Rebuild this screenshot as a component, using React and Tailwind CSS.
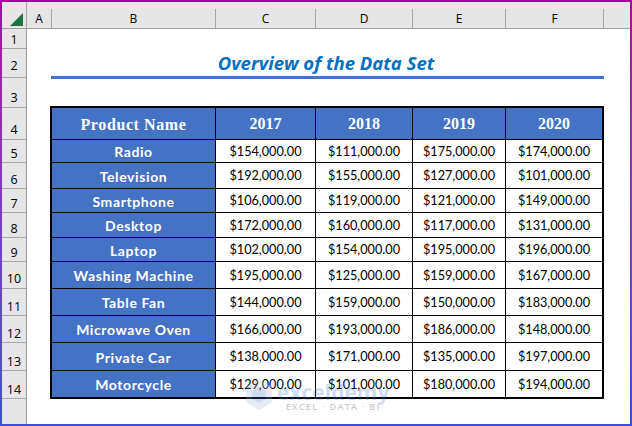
import React from 'react';

const rowHeads = [
  { n: 1, cls: 'h-[20px] pb-0' },
  { n: 2, cls: 'h-[29px] pb-[3px]' },
  { n: 3, cls: 'h-[30px] pb-[1px]' },
  { n: 4, cls: 'h-[32px] pb-[1px]' },
  { n: 5, cls: 'h-[23px] pb-0' },
  { n: 6, cls: 'h-[26px] pb-0' },
  { n: 7, cls: 'h-[24px] pb-0' },
  { n: 8, cls: 'h-[25px] pb-0' },
  { n: 9, cls: 'h-[24px] pb-0' },
  { n: 10, cls: 'h-[27px] pb-[1px]' },
  { n: 11, cls: 'h-[27px] pb-0' },
  { n: 12, cls: 'h-[27px] pb-0' },
  { n: 13, cls: 'h-[28px] pb-0' },
  { n: 14, cls: 'h-[28px] pb-0' },
];

const colHeads = [
  { label: 'A', cls: 'w-[25px]' },
  { label: 'B', cls: 'w-[164px]' },
  { label: 'C', cls: 'w-[100px]' },
  { label: 'D', cls: 'w-[97px]' },
  { label: 'E', cls: 'w-[93px]' },
  { label: 'F', cls: 'w-[98px]' },
];

const rows = [
  { name: 'Radio', h: 'h-[23px]', v: ['$154,000.00', '$111,000.00', '$175,000.00', '$174,000.00'] },
  { name: 'Television', h: 'h-[26px]', v: ['$192,000.00', '$155,000.00', '$127,000.00', '$101,000.00'] },
  { name: 'Smartphone', h: 'h-[24px]', v: ['$106,000.00', '$119,000.00', '$121,000.00', '$149,000.00'] },
  { name: 'Desktop', h: 'h-[25px]', v: ['$172,000.00', '$160,000.00', '$117,000.00', '$131,000.00'] },
  { name: 'Laptop', h: 'h-[24px]', v: ['$102,000.00', '$154,000.00', '$195,000.00', '$196,000.00'] },
  { name: 'Washing Machine', h: 'h-[27px]', v: ['$195,000.00', '$125,000.00', '$159,000.00', '$167,000.00'] },
  { name: 'Table Fan', h: 'h-[27px]', v: ['$144,000.00', '$159,000.00', '$150,000.00', '$183,000.00'] },
  { name: 'Microwave Oven', h: 'h-[27px]', v: ['$166,000.00', '$193,000.00', '$186,000.00', '$148,000.00'] },
  { name: 'Private Car', h: 'h-[28px]', v: ['$138,000.00', '$171,000.00', '$135,000.00', '$197,000.00'] },
  { name: 'Motorcycle', h: 'h-[26px]', v: ['$129,000.00', '$101,000.00', '$180,000.00', '$194,000.00'] },
];

const valueCols = ['w-[100px]', 'w-[97px]', 'w-[93px]', 'w-[96px]'];
const years = ['2017', '2018', '2019', '2020'];

function Watermark() {
  return (
    <div className="absolute left-[218px] top-[349px] flex items-start gap-[4px] opacity-25 pointer-events-none">
      <svg width="28" height="33" viewBox="0 0 28 33">
        <path d="M14 1 L27 9 L27 24 L14 32 L1 24 L1 9 Z" fill="#9db4dc" />
        <path d="M14 9 L21 13 L21 21 L14 25 L7 21 L7 13 Z" fill="#4472c4" />
        <path d="M14 1 L27 9 L21 13 L14 9 Z" fill="#c3d0e8" />
      </svg>
      <div className="flex flex-col items-center pt-[4px]">
        <span className="h-[20px] font-['Open_Sans',sans-serif] font-bold text-[21px] leading-[20px] text-[#4472c4]">exceldemy</span>
        <span className="h-[9px] font-['Open_Sans',sans-serif] font-semibold text-[9px] leading-[9px] tracking-[1.3px] text-[#333333]">EXCEL · DATA · BI</span>
      </div>
    </div>
  );
}

export default function App() {
  return (
    <div className="w-[632px] h-[426px] p-[2px] bg-linear-to-b from-[#a8009c] to-[#3a4fd6] overflow-hidden">
      <div className="w-full h-full flex flex-col bg-white">
        {/* column letters */}
        <div className="flex h-[27px] shrink-0 bg-[#e6e6e6] border-b border-[#9f9f9f] font-['Open_Sans',sans-serif] text-[12px] text-black">
          <div className="w-[25px] h-full border-r border-[#a6a6a6] flex items-end justify-end pr-[3px] pb-[2px]">
            <svg width="13" height="13" viewBox="0 0 13 13">
              <path d="M13 0 L13 13 L0 13 Z" fill="#217346" />
            </svg>
          </div>
          {colHeads.map(c => (
            <div key={c.label} className={`${c.cls} mt-[7px] border-r border-[#a6a6a6] flex items-center justify-center`}>
              {c.label}
            </div>
          ))}
        </div>

        <div className="flex flex-1 min-h-0">
          {/* row numbers */}
          <div className="w-[25px] shrink-0 bg-[#e6e6e6] border-r border-[#9f9f9f] font-['Open_Sans',sans-serif] text-[12.5px] leading-[16px] text-black">
            {rowHeads.map(r => (
              <div key={r.n} className={`${r.cls} border-b border-[#a6a6a6] flex items-end justify-center`}>
                {r.n}
              </div>
            ))}
          </div>

          {/* sheet */}
          <div className="relative flex-1">
            <div className="ml-[24px] w-[553px] h-[47px] flex items-end justify-center pb-[1px] pr-[3px]">
              <span className="font-['Open_Sans',sans-serif] font-bold italic text-[18.5px] leading-[24px] text-[#0070c0]">
                Overview of the Data Set
              </span>
            </div>
            <div className="ml-[24px] w-[553px] h-[3px] bg-[#4472c4]" />

            <div className="ml-[23px] mt-[27px] w-[554px] border-2 border-black bg-white">
              <div className="flex h-[32px] bg-[#4472c4] border-b border-black font-['Liberation_Serif',serif] font-bold text-white">
                <div className="w-[164px] pt-[2px] border-r border-black flex items-center justify-center text-[16px] tracking-[0.6px]">
                  Product Name
                </div>
                {years.map((y, i) => (
                  <div key={y} className={`${valueCols[i]} ${i < 3 ? 'border-r border-black' : ''} flex items-center justify-center text-[16px]`}>
                    {y}
                  </div>
                ))}
              </div>
              {rows.map((r, idx) => (
                <div key={r.name} className={`flex ${r.h} ${idx < rows.length - 1 ? 'border-b border-black' : ''}`}>
                  <div className="w-[164px] pt-[1px] bg-[#4472c4] border-r border-black flex items-center justify-center font-['Lato',sans-serif] font-bold text-[14px] tracking-[0.6px] text-white">
                    {r.name}
                  </div>
                  {r.v.map((val, i) => (
                    <div key={i} className={`${valueCols[i]} ${i < 3 ? 'border-r border-black' : ''} pt-[1px] flex items-center justify-center font-['Lato',sans-serif] text-[12.7px] text-black`}>
                      {val}
                    </div>
                  ))}
                </div>
              ))}
            </div>
            <Watermark />
          </div>
        </div>
      </div>
    </div>
  );
}
